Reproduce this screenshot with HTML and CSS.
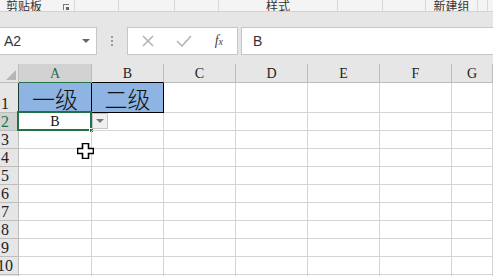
FILE: index.html
```html
<!DOCTYPE html>
<html lang="zh-CN">
<head>
    <meta charset="UTF-8">
    <title>Excel</title>
    <link rel="stylesheet" href="styles.css">
</head>
<body>

<div class="ribbon">
    <div class="group g-clip">
        <span class="glabel">剪贴板</span>
        <span class="launcher"></span>
    </div>
    <div class="group g-font"></div>
    <div class="group g-align"></div>
    <div class="group g-num"></div>
    <div class="group g-style"><span class="glabel">样式</span></div>
    <div class="group g-cells"></div>
    <div class="group g-edit"></div>
    <div class="group g-new"><span class="glabel">新建组</span></div>
    <div class="group g-end"></div>
</div>

<div class="fbar">
    <div class="namebox">
        <span>A2</span>
        <span class="nb-arrow"></span>
    </div>
    <div class="grip"><i></i><i></i><i></i></div>
    <div class="fbtns">
        <svg width="12" height="12" viewBox="0 0 12 12"><path d="M1 1 L11 11 M11 1 L1 11" stroke="#b4b4b4" stroke-width="1.6" fill="none"/></svg>
        <svg width="16" height="12" viewBox="0 0 16 12"><path d="M1 6 L6 11 L15 1" stroke="#b4b4b4" stroke-width="1.6" fill="none"/></svg>
        <span class="fx">f<small>x</small></span>
    </div>
    <div class="finput">B</div>
</div>

<div class="sheet">
    <div class="corner"><span class="tri"></span></div>
    <div class="ch sel">A</div>
    <div class="ch chb">B</div>
    <div class="ch">C</div>
    <div class="ch">D</div>
    <div class="ch">E</div>
    <div class="ch">F</div>
    <div class="ch">G</div>

    <div class="rh r1">1</div>
    <div class="c a1">一级</div>
    <div class="c b1">二级</div>
    <div class="c"></div><div class="c"></div><div class="c"></div><div class="c"></div><div class="c"></div>

    <div class="rh rsel">2</div>
    <div class="c a2">B
        <span class="selbox"></span>
        <span class="handle"></span>
    </div>
    <div class="c b2"><span class="ddbtn"></span></div>
    <div class="c"></div><div class="c"></div><div class="c"></div><div class="c"></div><div class="c"></div>

    <div class="rh">3</div>
    <div class="c c-cur"><svg class="cursor" width="17" height="16" viewBox="0 0 17 16"><path d="M5.5 0.5 H11.5 V5.5 H16.5 V10.5 H11.5 V15.5 H5.5 V10.5 H0.5 V5.5 H5.5 Z" fill="#fff" stroke="#000" stroke-width="1.6"/></svg></div>
    <div class="c"></div><div class="c"></div><div class="c"></div><div class="c"></div><div class="c"></div><div class="c"></div>

    <div class="rh">4</div>
    <div class="c"></div><div class="c"></div><div class="c"></div><div class="c"></div><div class="c"></div><div class="c"></div><div class="c"></div>
    <div class="rh">5</div>
    <div class="c"></div><div class="c"></div><div class="c"></div><div class="c"></div><div class="c"></div><div class="c"></div><div class="c"></div>
    <div class="rh">6</div>
    <div class="c"></div><div class="c"></div><div class="c"></div><div class="c"></div><div class="c"></div><div class="c"></div><div class="c"></div>
    <div class="rh">7</div>
    <div class="c"></div><div class="c"></div><div class="c"></div><div class="c"></div><div class="c"></div><div class="c"></div><div class="c"></div>
    <div class="rh">8</div>
    <div class="c"></div><div class="c"></div><div class="c"></div><div class="c"></div><div class="c"></div><div class="c"></div><div class="c"></div>
    <div class="rh">9</div>
    <div class="c"></div><div class="c"></div><div class="c"></div><div class="c"></div><div class="c"></div><div class="c"></div><div class="c"></div>
    <div class="rh">10</div>
    <div class="c"></div><div class="c"></div><div class="c"></div><div class="c"></div><div class="c"></div><div class="c"></div><div class="c"></div>
    <div class="rh">11</div>
    <div class="c"></div><div class="c"></div><div class="c"></div><div class="c"></div><div class="c"></div><div class="c"></div><div class="c"></div>
</div>

</body>
</html>
```

FILE: styles.css
```css
/* Page */
body {
    margin: 0;
    width: 493px;
    height: 276px;
    overflow: hidden;
    background-color: #e6e6e6;
    font-family: 'Liberation Sans', 'Noto Sans CJK SC', sans-serif;
}

/* Ribbon bottom strip */
.ribbon {
    display: flex;
    height: 11px;
    background-color: #f4f4f4;
    border-bottom: 1px solid #d2d2d2;
    overflow: hidden;
}

.group {
    position: relative;
    display: flex;
    justify-content: center;
    align-items: flex-end;
    border-right: 1px solid #d8d8d8;
    box-sizing: border-box;
}

.glabel {
    font-family: 'Noto Sans CJK SC', sans-serif;
    font-size: 12px;
    line-height: 12px;
    color: #333;
    margin-bottom: -1px;
}

.g-clip { width: 75px; justify-content: flex-start; padding-left: 6px; }
.g-font { width: 44px; }
.g-align { width: 56px; }
.g-num { width: 44px; }
.g-style { width: 119px; }
.g-cells { width: 45px; }
.g-edit { width: 43px; }
.g-new { width: 52px; }
.g-end { width: 10px; }

/* Dialog launcher */
.launcher {
    position: absolute;
    left: 63px;
    top: 4px;
    width: 6px;
    height: 6px;
    border-left: 1px solid #777;
    border-top: 1px solid #777;
    box-sizing: border-box;
}

.launcher::after {
    content: "";
    position: absolute;
    right: 0;
    bottom: 0;
    width: 3px;
    height: 3px;
    background-color: #666;
}

/* Formula bar */
.fbar {
    display: flex;
    height: 28px;
    margin-top: 15px;
    margin-bottom: 9px;
}

.namebox {
    display: flex;
    align-items: center;
    justify-content: space-between;
    width: 98px;
    margin-left: -1px;
    padding: 0 6px 0 4px;
    background-color: #fff;
    border: 1px solid #c6c6c6;
    box-sizing: border-box;
    font-size: 14px;
    color: #333;
}

.nb-arrow {
    width: 0;
    height: 0;
    border-left: 4px solid transparent;
    border-right: 4px solid transparent;
    border-top: 4px solid #666;
}

.grip {
    display: flex;
    flex-direction: column;
    justify-content: center;
    align-items: center;
    gap: 2px;
    width: 30px;
}

.grip i {
    width: 2px;
    height: 2px;
    background-color: #999;
}

.fbtns {
    display: flex;
    align-items: center;
    justify-content: space-between;
    width: 111px;
    padding: 0 14px 0 14px;
    background-color: #fff;
    border: 1px solid #c6c6c6;
    box-sizing: border-box;
}

.fx {
    font-family: 'Liberation Serif', serif;
    font-style: italic;
    font-size: 14px;
    color: #444;
}

.fx small {
    font-size: 10px;
}

.finput {
    flex: 1;
    margin-left: 3px;
    margin-right: -2px;
    padding-left: 11px;
    line-height: 26px;
    background-color: #fff;
    border: 1px solid #c6c6c6;
    font-size: 14px;
    color: #333;
}

/* Sheet grid */
.sheet {
    display: grid;
    grid-template-columns: 19px 73px 72px 72px 72px 72px 72px 1fr;
    grid-template-rows: 19px 30px repeat(10, 18px);
    background-color: #fff;
}

.sheet > div {
    box-sizing: border-box;
    border-right: 1px solid #d4d4d4;
    border-bottom: 1px solid #d4d4d4;
}

.corner {
    position: relative;
    background-color: #e6e6e6;
    border-color: #bdbdbd !important;
}

.tri {
    position: absolute;
    right: 2px;
    bottom: 2px;
    width: 0;
    height: 0;
    border-left: 10px solid transparent;
    border-bottom: 10px solid #b6b6b6;
}

.ch {
    background-color: #e6e6e6;
    border-right-color: #bdbdbd !important;
    border-bottom-color: #bdbdbd !important;
    text-align: center;
    font-family: 'Liberation Serif', serif;
    font-size: 14px;
    line-height: 19px;
    color: #222;
}

.ch.sel {
    background-color: #d2d2d2;
    color: #217346;
    border-bottom: 1px solid #217346 !important;
}

.ch.chb {
    border-bottom-color: #000 !important;
}

.rh {
    display: flex;
    align-items: flex-end;
    justify-content: center;
    padding-right: 8px;
    overflow: hidden;
    background-color: #e6e6e6;
    border-right-color: #bdbdbd !important;
    border-bottom-color: #bdbdbd !important;
    font-family: 'Liberation Serif', serif;
    font-size: 16px;
    line-height: 16px;
    color: #222;
}

.rh.r1 {
    border-right-color: #1d3d2b !important;
}

.rh.rsel {
    background-color: #d2d2d2;
    color: #217346;
    border-right: 1px solid #217346 !important;
}

/* Cells */
.c {
    position: relative;
}

.a1, .b1 {
    display: flex;
    align-items: flex-end;
    justify-content: center;
    background-color: #8db4e2;
    font-family: 'Noto Sans CJK SC', sans-serif;
    font-weight: 300;
    font-size: 23px;
    line-height: 28px;
    color: #111;
    border-right-color: #000 !important;
    border-bottom-color: #000 !important;
}

.a2 {
    text-align: center;
    font-family: 'Liberation Serif', serif;
    font-size: 14px;
    line-height: 17px;
    color: #111;
}

.selbox {
    position: absolute;
    left: -2px;
    top: -2px;
    right: -1px;
    bottom: -1px;
    border: 2px solid #217346;
}

.handle {
    position: absolute;
    right: -3px;
    bottom: -3px;
    width: 5px;
    height: 5px;
    background-color: #217346;
    border: 1px solid #fff;
    box-sizing: border-box;
}

.ddbtn {
    position: absolute;
    left: 0;
    top: 0;
    width: 16px;
    height: 16px;
    background-color: #f0f0f0;
    border: 1px solid #c6c6c6;
    box-sizing: border-box;
}

.ddbtn::after {
    content: "";
    position: absolute;
    left: 3px;
    top: 5px;
    border-left: 4px solid transparent;
    border-right: 4px solid transparent;
    border-top: 4px solid #777;
}

.cursor {
    position: absolute;
    left: 58px;
    top: 12px;
    z-index: 2;
}
```
